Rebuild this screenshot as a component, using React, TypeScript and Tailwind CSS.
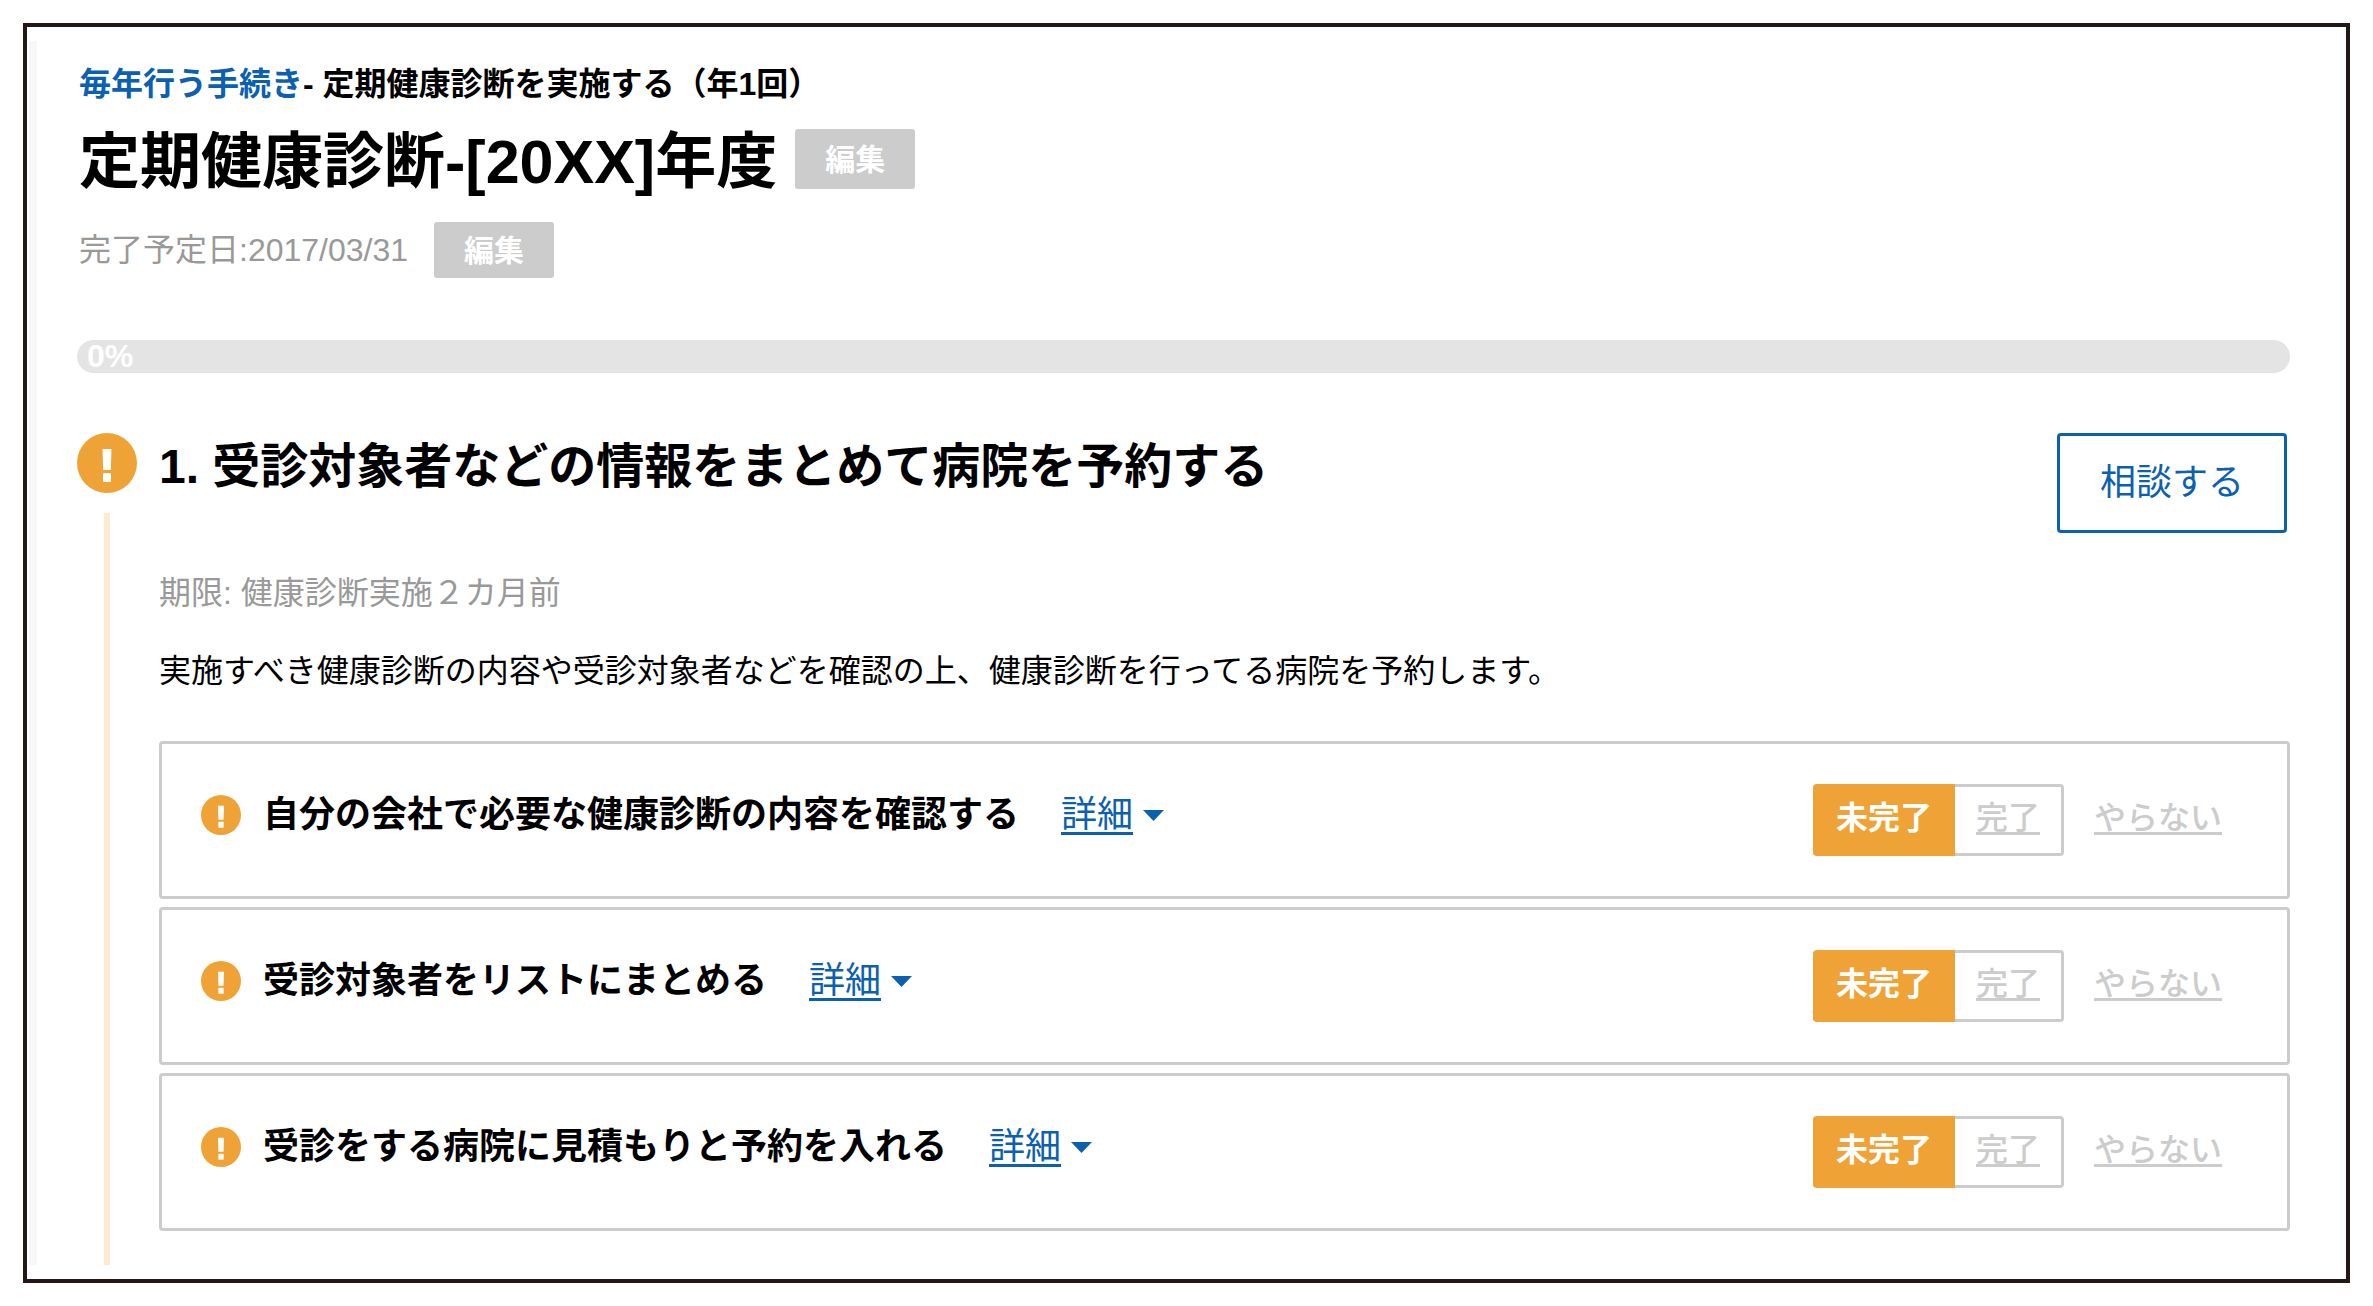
import { useState } from "react";
import clsx from "clsx";

type Status = "todo" | "done" | "skip";

const tasks = [
  { id: 1, title: "自分の会社で必要な健康診断の内容を確認する" },
  { id: 2, title: "受診対象者をリストにまとめる" },
  { id: 3, title: "受診をする病院に見積もりと予約を入れる" },
];

const AlertIcon = ({ className }: { className?: string }) => (
  <svg viewBox="0 0 60 60" className={className} aria-hidden="true">
    <circle cx="30" cy="30" r="30" fill="#efa336" />
    <path d="M25.5 16h9l-.7 21h-7.6z" fill="#fff" />
    <rect x="26" y="40" width="8" height="9" rx="1" fill="#fff" />
  </svg>
);

const EditButton = ({ className }: { className?: string }) => (
  <button
    type="button"
    className={clsx(
      "rounded-[3px] bg-[#ccc] px-[30px] text-[30px] font-bold text-white",
      className
    )}
  >
    編集
  </button>
);

const TaskRow = ({ title }: { title: string }) => {
  const [status, setStatus] = useState<Status>("todo");

  return (
    <li className="flex h-[158px] items-start justify-between rounded-[4px] border-3 border-[#ccc] pt-10 pr-[65px] pl-[39px]">
      <div className="flex h-[62px] items-center text-[36px] leading-[62px]">
        <AlertIcon className="mr-[22px] size-10" />
        <h3 className="font-bold">{title}</h3>
        <a href="#" className="ml-[42px] flex items-center text-[#0b60b0]">
          <span className="underline decoration-3 underline-offset-[5px] [text-decoration-skip-ink:none]">
            詳細
          </span>
          <svg viewBox="0 0 21 11" className="ml-[10px] h-[11px] w-[21px]">
            <path d="M0 0h21L10.5 11z" fill="currentColor" />
          </svg>
        </a>
      </div>

      <div className="flex h-[72px] text-[32px] leading-[60px] text-[#ccc]">
        <button
          type="button"
          onClick={() => setStatus("todo")}
          className={clsx(
            "rounded-l-[4px] border-y-3 px-[23px] pb-1",
            status === "todo"
              ? "border-[#efa336] bg-[#efa336] font-bold text-white"
              : "border-[#ccc]"
          )}
        >
          未完了
        </button>
        <button
          type="button"
          onClick={() => setStatus("done")}
          className="rounded-r-[4px] border-3 border-l-0 border-[#ccc] px-[21px] pb-1 font-medium underline decoration-3 underline-offset-[3px] [text-decoration-skip-ink:none]"
        >
          完了
        </button>
        <button
          type="button"
          onClick={() => setStatus("skip")}
          className="ml-[30px] pb-1 font-medium underline decoration-3 underline-offset-[3px] [text-decoration-skip-ink:none]"
        >
          やらない
        </button>
      </div>
    </li>
  );
};

const App = () => {
  return (
    <div
      lang="ja"
      className="bg-white p-[23px] font-['Liberation_Sans','Noto_Sans_CJK_JP',sans-serif] text-black"
    >
      <main className="border-4 border-[#231815] py-[14px] pl-[2px]">
        <div className="border-l-8 border-[#f7f7f7] pt-[19px] pr-14 pl-10">
          <header className="pl-0.5">
            <p className="text-[32px] leading-[48px] font-bold">
              <a href="#" className="text-[#0b60b0]">
                毎年行う手続き
              </a>
              - 定期健康診断を実施する（年1回）
            </p>

            <div className="mt-[21px] flex h-15 gap-[18px]">
              <h1 className="text-[61px] leading-[66px] font-bold">
                定期健康診断-[20XX]年度
              </h1>
              <EditButton className="h-15" />
            </div>

            <div className="mt-[33px] flex items-center gap-[26px]">
              <p className="text-[32px] leading-[48px] text-[#999]">
                完了予定日:2017/03/31
              </p>
              <EditButton className="h-14" />
            </div>
          </header>

          <div
            role="progressbar"
            aria-valuenow={0}
            aria-valuemin={0}
            aria-valuemax={100}
            className="mt-[62px] h-[33px] rounded-full bg-[#e4e4e4] pl-[10px] text-[32px] leading-[32px] font-bold text-white"
          >
            0%
          </div>

          <section className="mt-15 flex gap-[22px]">
            <div className="flex flex-col items-center">
              <AlertIcon className="size-15" />
              <div className="mt-5 w-[6px] flex-1 bg-[#fcebcf]" />
            </div>

            <div className="flex-1 pb-[34px]">
              <div className="flex items-start justify-between pr-[3px]">
                <h2 className="text-[48px] leading-[68px] font-bold">
                  1. 受診対象者などの情報をまとめて病院を予約する
                </h2>
                <button
                  type="button"
                  className="h-[100px] rounded-[4px] border-3 border-[#0b60b0] px-10 pb-px text-[36px] text-[#0b60b0]"
                >
                  相談する
                </button>
              </div>

              <p className="mt-9 text-[32px] leading-[48px] text-[#999]">
                期限: 健康診断実施２カ月前
              </p>
              <p className="mt-[30px] text-[32px] leading-[48px]">
                実施すべき健康診断の内容や受診対象者などを確認の上、健康診断を行ってる病院を予約します。
              </p>

              <ul className="mt-[46px] flex flex-col gap-2">
                {tasks.map((task) => (
                  <TaskRow key={task.id} title={task.title} />
                ))}
              </ul>
            </div>
          </section>
        </div>
      </main>
    </div>
  );
};

export default App;
